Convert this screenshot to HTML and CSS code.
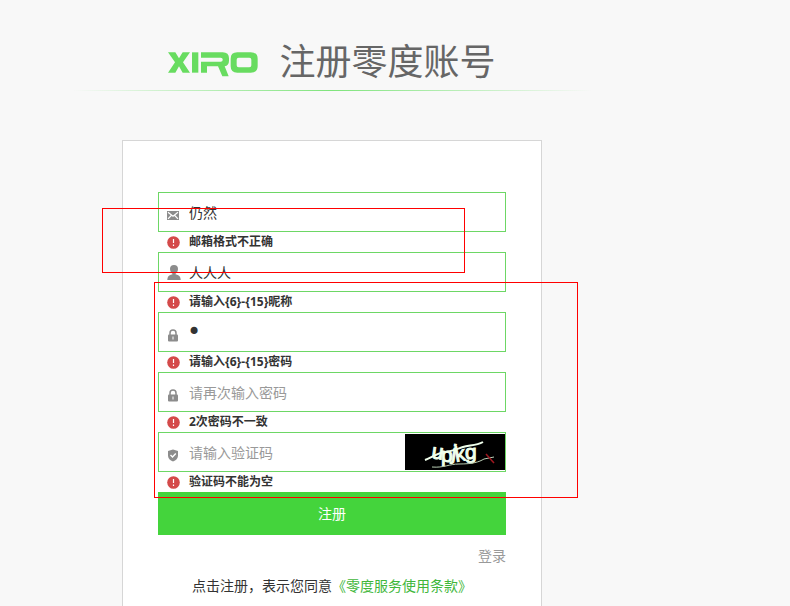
FILE: index.html
```html
<!DOCTYPE html>
<html lang="zh-CN">
<head>
<meta charset="utf-8">
<meta name="viewport" content="width=device-width, initial-scale=1">
<title>注册零度账号</title>
<link rel="stylesheet" href="styles.css">
</head>
<body>
<svg class="sprite" aria-hidden="true">
  <symbol id="mail" viewBox="0 0 12 9">
    <path fill="#8c8c8c" d="M0 0h12v9H0z"/>
    <path fill="none" stroke="#fff" stroke-width="1.200" d="M1 1.200 6 5.200l5-4M1 7.800l3.300-3.300M11 7.800 7.700 4.500"/>
  </symbol>
  <symbol id="user" viewBox="0 0 14 15">
    <path fill="#8c8c8c" d="M7 0a4 4 0 0 1 4 4c0 2.300-1.300 4-2.500 4.700v.6c3.500.7 5.200 2.200 5.200 5.700H.3c0-3.500 1.700-5 5.200-5.700v-.6C4.300 8 3 6.300 3 4a4 4 0 0 1 4-4z"/>
  </symbol>
  <symbol id="lock" viewBox="0 0 12 13">
    <path fill="none" stroke="#8c8c8c" stroke-width="1.500" d="M3 6V4a3 3 0 0 1 6 0v2"/>
    <rect x="1" y="5.500" width="10" height="7" rx="1" fill="#8c8c8c"/>
    <path stroke="#fff" d="M6 7.500v3"/>
  </symbol>
  <symbol id="shield" viewBox="0 0 12 13">
    <path fill="#8c8c8c" d="M6 .5 11 2v4.500c0 3-2 4.700-5 6-3-1.300-5-3-5-6V2z"/>
    <path fill="none" stroke="#fff" stroke-width="1.400" d="m3.500 6 2 2 3.300-3.500"/>
  </symbol>
  <symbol id="alert" viewBox="0 0 13 13">
    <circle cx="6.500" cy="6.500" r="6.300" fill="#d44a4a"/>
    <path stroke="#fff" stroke-width="1.200" d="M6.500 3v4M6.500 8.500V10"/>
  </symbol>
</svg>

<main class="page">
  <header class="header">
    <svg class="logo" viewBox="0 0 270 75" role="img" aria-label="XIRO">
      <g fill="#68dc60">
        <path d="M0 1h22l11 18L44 1h22L45 31l21 31H44L33 43 22 62H0l21-31z"/>
        <path d="M72 1h19v61H72z"/>
        <path d="M99 1h65q19 0 19 18v7q0 14-13 17l12 30h-19l-13-30h-33v19H99V29h59q6 0 6-5v-2q0-5-6-5H99z"/>
        <path fill-rule="evenodd" d="M208 1h40q21 0 21 19v23q0 19-21 19h-40q-20 0-20-19V20q0-19 20-19zm4 16q-6 0-6 6v17q0 6 6 6h32q6 0 6-6V23q0-6-6-6z"/>
      </g>
    </svg>
    <h1 class="title">注册零度账号</h1>
  </header>

  <form class="card" novalidate>
    <div class="field">
      <svg class="icon icon-mail" aria-hidden="true"><use href="#mail"/></svg>
      <input class="input" type="text" aria-label="邮箱" value="仍然">
    </div>
    <p class="error"><svg class="alert" aria-hidden="true"><use href="#alert"/></svg>邮箱格式不正确</p>

    <div class="field">
      <svg class="icon icon-user" aria-hidden="true"><use href="#user"/></svg>
      <input class="input" type="text" aria-label="昵称" value="人人人">
    </div>
    <p class="error"><svg class="alert" aria-hidden="true"><use href="#alert"/></svg>请输入{6}-{15}昵称</p>

    <div class="field">
      <svg class="icon" aria-hidden="true"><use href="#lock"/></svg>
      <input class="input password" type="password" aria-label="密码" value="1">
    </div>
    <p class="error"><svg class="alert" aria-hidden="true"><use href="#alert"/></svg>请输入{6}-{15}密码</p>

    <div class="field">
      <svg class="icon" aria-hidden="true"><use href="#lock"/></svg>
      <input class="input" type="password" aria-label="再次输入密码" placeholder="请再次输入密码">
    </div>
    <p class="error"><svg class="alert" aria-hidden="true"><use href="#alert"/></svg>2次密码不一致</p>

    <div class="field">
      <svg class="icon" aria-hidden="true"><use href="#shield"/></svg>
      <input class="input" type="text" aria-label="验证码" placeholder="请输入验证码">
      <svg class="captcha" viewBox="0 0 100 36" role="img" aria-label="验证码图片">
        <path d="M0 0h100v36H0z"/>
        <g class="captcha-text">
          <text x="26" y="24" transform="rotate(8 26 24)">u</text>
          <text x="36" y="28">p</text>
          <text x="46" y="25" transform="rotate(8 46 25)">j</text>
          <text x="51" y="28" transform="rotate(-10 51 28)">k</text>
          <text x="60" y="25">g</text>
        </g>
        <path fill="none" stroke="#f0ffec" stroke-width="2" d="M20 26c8-3 12-7 20-8s12-3 18-5 13-1 20-5"/>
        <path fill="none" stroke="#b9ceb5" d="M27 33c12 1 17-3 27-3 14 0 20-2 25-5l10-2"/>
        <path stroke="#a01820" stroke-width="1.500" d="m81 20 8 9"/>
      </svg>
    </div>
    <p class="error"><svg class="alert" aria-hidden="true"><use href="#alert"/></svg>验证码不能为空</p>

    <button class="submit" type="button">注册</button>
    <a class="login" href="#">登录</a>
    <p class="terms">点击注册，表示您同意<a href="#">《零度服务使用条款》</a></p>
  </form>

  <div class="mark mark-email"></div>
  <div class="mark mark-rest"></div>
</main>
</body>
</html>
```
FILE: styles.css
```css
* {
  box-sizing: border-box;
}

body {
  margin: 0;
  background: #f8f8f8;
  color: #333;
  font: 14px/20px "Open Sans", "Noto Sans CJK SC", sans-serif;
}

.sprite {
  position: absolute;
  width: 0;
  height: 0;
}

.page {
  position: relative;
  display: flex;
  flex-direction: column;
  align-items: center;
  width: 100%;
  max-width: 664px;
  min-height: 100vh;
  padding-top: 34px;
}

.header {
  display: flex;
  align-items: center;
  justify-content: center;
  gap: 21px;
  width: 100%;
  max-width: 520px;
  padding-bottom: 1px;
  background: linear-gradient(90deg, transparent, #7fe47c, transparent) bottom / 100% 1px no-repeat;
}

.logo {
  width: 90px;
  height: 25px;
  margin-top: 4px;
}

.title {
  margin: 0;
  color: #666;
  font-size: 36px;
  font-weight: 400;
  line-height: 56px;
}

.card {
  display: flex;
  flex: 1;
  flex-direction: column;
  width: 100%;
  max-width: 420px;
  margin-top: 49px;
  padding: 51px 35px 0;
  background: #fff;
  border: 1px solid #d6d6d6;
  border-bottom: 0;
}

.field {
  display: flex;
  align-items: center;
  height: 40px;
  padding-left: 8px;
  border: 1px solid #6dd765;
}

.icon {
  flex: none;
  width: 12px;
  height: 13px;
  margin-top: 6px;
}

.icon-mail {
  height: 9px;
}

.icon-user {
  width: 14px;
  height: 15px;
  margin-top: 0;
  margin-right: -2px;
}

.input {
  flex: 1;
  min-width: 0;
  height: 38px;
  padding: 0 0 0 10px;
  background: none;
  border: 0;
  outline: 0;
  color: #333;
  font: inherit;
}

.input::placeholder {
  color: #999;
  opacity: 1;
}

.password {
  font-family: "DejaVu Sans", sans-serif;
  font-size: 24px;
  padding-left: 8px;
}

.captcha {
  flex: none;
  width: 100px;
  height: 36px;
}

.captcha-text {
  fill: #f0ffec;
  stroke: #f0ffec;
  font: 21px "Liberation Sans", sans-serif;
}

.error {
  display: flex;
  align-items: center;
  gap: 9px;
  margin: 0;
  padding-left: 9px;
  font-size: 12px;
  font-weight: 700;
}

.alert {
  width: 13px;
  height: 13px;
}

.submit {
  height: 43px;
  padding: 0;
  background: #44d43c;
  border: 0;
  color: #fff;
  font: inherit;
}

.login {
  align-self: flex-end;
  margin-top: 11px;
  color: #999;
  text-decoration: none;
}

.terms {
  margin: 10px 0 0;
  text-align: center;
}

.terms a {
  color: #41b73b;
  text-decoration: none;
}

/* Review outlines drawn over the form */
.mark {
  position: absolute;
  border: 1px solid #f00;
  pointer-events: none;
}

.mark-email {
  top: 208px;
  left: 102px;
  width: 363px;
  height: 65px;
}

.mark-rest {
  top: 282px;
  left: 154px;
  width: 424px;
  height: 216px;
}
```
